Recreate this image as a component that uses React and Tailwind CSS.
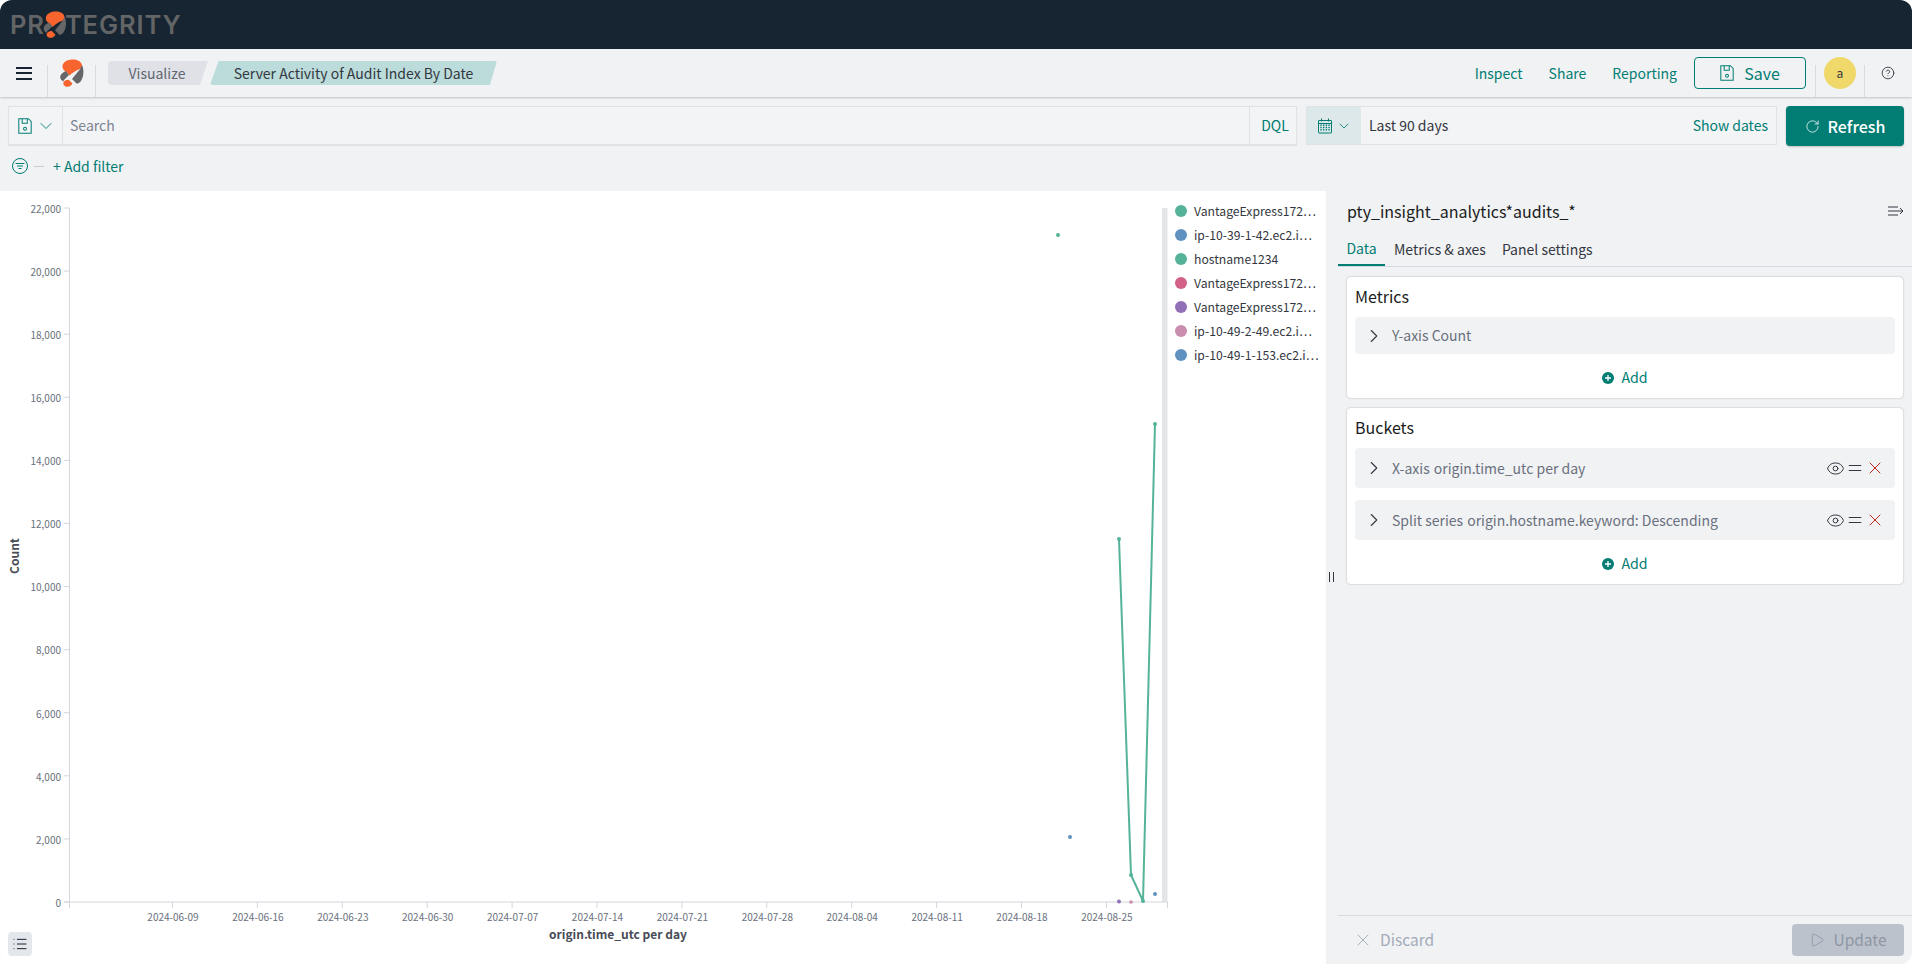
import React from "react";
import { ChevronDown, ChevronRight, RotateCw, X, Play, Eye, Equal, List, CircleHelp } from "lucide-react";

const FONT = "font-['Noto_Sans_CJK_SC','Noto_Sans',sans-serif]";

function LogoMark({ className }) {
  return (
    <svg viewBox="0 0 24 28" className={className}>
      <path d="M13 0.5C18 0.5 22 3 22 7C22 10 18 10.5 15.5 12C13 13.5 11 15 9.5 16.5L7 13.5C4 12 2 9.5 2.5 6.5C3.5 2.5 8 0.5 13 0.5Z" fill="#f8642e" />
      <path d="M22 6C24 10 24 17 21.5 21C20 24 17.5 25.5 16 24L12 20L16.5 14.5C18 12.5 20 11 22 6Z" fill="#666668" />
      <path d="M6 12L9 16L4 21C3.5 21.5 3.5 22 3.8 22.5C1 22 -0.5 19 0.5 16.5C1.5 14 4 13 6 12Z" fill="#666668" />
      <path d="M3.5 23C5 21.5 7.5 20.5 9 21L12.5 24.5C11.5 27 8 28.5 5.5 27.5C3.5 26.5 3 25 3.5 23Z" fill="#f8642e" />
    </svg>
  );
}

function SaveIcon({ className }) {
  return (
    <svg viewBox="0 0 16 16" fill="none" stroke="currentColor" strokeWidth="0.9" className={className}>
      <path d="M2.5 1.5H11L13.5 4V14.5H2.5Z" />
      <path d="M5.5 1.5V5.5H10V1.5" />
      <circle cx="8" cy="10.5" r="1.3" />
    </svg>
  );
}

function CalendarIcon() {
  const dots = [];
  for (let r = 0; r < 3; r++) for (let c = 0; c < 4; c++) dots.push([4 + c * 2.7, 7.2 + r * 2.3]);
  return (
    <svg viewBox="0 0 16 16" fill="none" stroke="currentColor" strokeWidth="1" className="h-[16px] w-[16px]">
      <rect x="1.5" y="2.5" width="13" height="12.5" rx="0.5" />
      <path d="M1.5 5.5H14.5M4.5 0.5V3.5M11.5 0.5V3.5" />
      {dots.map(([x, y], i) => (
        <rect key={i} x={x - 0.7} y={y - 0.7} width="1.4" height="1.4" fill="currentColor" stroke="none" />
      ))}
    </svg>
  );
}

function FilterIcon() {
  return (
    <svg viewBox="0 0 16 16" fill="none" stroke="currentColor" strokeWidth="1" className="h-[16px] w-[16px] text-[#017d73]">
      <circle cx="8" cy="8" r="7.5" />
      <path d="M3.5 5.5H12.5M5 8H11M6.5 10.5H9.5" />
    </svg>
  );
}

function Crumb({ children, active }) {
  return active ? (
    <div className="flex h-6 w-[287px] items-center justify-center rounded-[3px] bg-[#bbdcda] text-[14px] text-[#343741] [clip-path:polygon(3%_0,100%_0,97.5%_100%,0_100%)]">
      {children}
    </div>
  ) : (
    <div className="flex h-6 w-[100px] items-center justify-center rounded-l-[4px] bg-[#dfe1e6] pr-[2px] text-[14px] text-[#5f6672] [clip-path:polygon(0_0,100%_0,92%_100%,0_100%)]">
      {children}
    </div>
  );
}

function AggRow({ label, detail, controls, tall }) {
  return (
    <div className={`flex items-center rounded-[4px] bg-[#f1f2f4] pr-[10px] pl-2 text-[14px] text-[#69707d] ${tall ? "h-10" : "h-[37px]"}`}>
      <ChevronRight className="mr-[7px] h-[22px] w-[22px] text-[#343741]" strokeWidth={1.2} />
      <span>{label}</span>
      {detail && <span className="ml-1">{detail}</span>}
      {controls && (
        <div className="ml-auto flex items-center">
          <Eye className="h-[19px] w-[19px] text-[#343741]" strokeWidth={1.25} />
          <Equal className="h-5 w-5 text-[#343741]" strokeWidth={1.25} />
          <X className="h-5 w-5 text-[#bd271e]" strokeWidth={1.2} />
        </div>
      )}
    </div>
  );
}

function AddRow() {
  return (
    <div className="flex items-center justify-center gap-[7px] pt-[4px] text-[14.2px] text-[#017d73]">
      <svg viewBox="0 0 12 12" className="h-[12px] w-[12px]">
        <circle cx="6" cy="6" r="6" fill="#017d73" />
        <path d="M6 3V9M3 6H9" stroke="#fff" strokeWidth="1.3" />
      </svg>
      <span>Add</span>
    </div>
  );
}

const LEGEND = [
  ["#54b399", "VantageExpress172"],
  ["#6092c0", "ip-10-39-1-42.ec2.i"],
  ["#54b399", "hostname1234", true],
  ["#d36086", "VantageExpress172"],
  ["#9170b8", "VantageExpress172"],
  ["#ca8eae", "ip-10-49-2-49.ec2.i"],
  ["#6092c0", "ip-10-49-1-153.ec2.i"],
];

function Chart() {
  const y0 = 902;
  const step = 63.09;
  const yTicks = Array.from({ length: 12 }, (_, i) => i * 2000);
  const dates = ["2024-06-09", "2024-06-16", "2024-06-23", "2024-06-30", "2024-07-07", "2024-07-14", "2024-07-21", "2024-07-28", "2024-08-04", "2024-08-11", "2024-08-18", "2024-08-25"];
  return (
    <svg viewBox="0 191 1175 773" className="h-[773px] w-[1175px] shrink-0" style={{ fontFamily: "'Noto Sans CJK SC','Noto Sans',sans-serif" }}>
      <rect x="1162" y="208" width="5.5" height="694" fill="#e3e5e9" />
      <path d="M69.5 208V908M64 902H1167.5M1167.5 902V908" stroke="#d3d6dc" strokeWidth="1" fill="none" />
      {yTicks.map((v, i) => {
        const y = y0 - i * step;
        return (
          <g key={v}>
            <path d={`M64 ${y}H69.5`} stroke="#d3d6dc" />
            <text x="61" y={y + 4.8} textAnchor="end" fontSize="10" fill="#69707d">{v.toLocaleString("en-US")}</text>
          </g>
        );
      })}
      {dates.map((d, i) => {
        const x = 172.5 + i * 84.9;
        return (
          <g key={d}>
            <path d={`M${x} 902V908`} stroke="#d3d6dc" />
            <text x={x + 0.5} y="920.5" textAnchor="middle" fontSize="10" fill="#69707d">{d}</text>
          </g>
        );
      })}
      <text x="618" y="939" textAnchor="middle" fontSize="12" fontWeight="700" fill="#484c56">origin.time_utc per day</text>
      <text transform="translate(19 556) rotate(-90)" textAnchor="middle" fontSize="12" fontWeight="700" fill="#484c56">Count</text>
      <polyline points="1119,539 1131,875 1143,901 1155,424" fill="none" stroke="#54b399" strokeWidth="2" />
      <circle cx="1119" cy="539" r="2" fill="#54b399" />
      <circle cx="1131" cy="875" r="2" fill="#54b399" />
      <circle cx="1143" cy="901" r="2" fill="#54b399" />
      <circle cx="1155" cy="424" r="2" fill="#54b399" />
      <circle cx="1058" cy="235" r="2" fill="#54b399" />
      <circle cx="1070" cy="837" r="2" fill="#6092c0" />
      <circle cx="1155" cy="894" r="2" fill="#6092c0" />
      <circle cx="1119" cy="901.5" r="2" fill="#9170b8" />
      <circle cx="1131" cy="902" r="1.8" fill="#ca8eae" />
    </svg>
  );
}

export default function App() {
  return (
    <div className={`${FONT} flex h-[964px] w-[1912px] flex-col overflow-hidden rounded-xl bg-[#f1f2f4] text-[#343741]`}>
      <header className="flex h-[49px] shrink-0 items-center bg-[#172431] pl-[10px]">
        <div className="flex items-center font-['Inter',sans-serif] text-[25.5px] leading-none font-semibold tracking-[0.9px] text-[#636466]">
          <span>PR</span>
          <LogoMark className="mx-[-2px] h-[27px] w-[24px]" />
          <span>TEGRITY</span>
        </div>
      </header>

      <nav className="relative z-10 flex h-[48px] shrink-0 items-stretch bg-[#f1f2f4] shadow-[0_1px_2px_rgba(0,0,0,0.2)]">
        <div className="flex w-[47px] items-center justify-center">
          <div className="flex w-4 flex-col gap-[3.5px]">
            <span className="h-[2px] bg-[#172431]" />
            <span className="h-[2px] bg-[#172431]" />
            <span className="h-[2px] bg-[#172431]" />
          </div>
        </div>
        <div className="mt-4 flex w-[49px] items-start justify-center border-x border-[#d8dbe0]">
          <LogoMark className="mt-[-6px] h-[28px] w-[24px]" />
        </div>
        <div className="ml-3 flex items-center gap-[2px]">
          <Crumb>Visualize</Crumb>
          <Crumb active>Server Activity of Audit Index By Date</Crumb>
        </div>
        <div className="ml-auto flex items-center text-[14px] text-[#017d73]">
          <span className="mr-[26px]">Inspect</span>
          <span className="mr-[26px]">Share</span>
          <span className="mr-[17px]">Reporting</span>
          <div className="flex h-8 w-[112px] items-center justify-center gap-[8px] rounded-[4px] border border-[#017d73] pr-[2px] text-[16px]">
            <SaveIcon className="h-[18px] w-[18px]" />
            <span>Save</span>
          </div>
        </div>
        <div className="mt-4 ml-[9px] flex w-[50px] items-start justify-center border-x border-[#d8dbe0]">
          <div className="mt-[-8px] flex h-8 w-8 items-center justify-center rounded-full bg-[#f0d86a] text-[12px] text-[#343741]">a</div>
        </div>
        <div className="flex w-[47px] items-center justify-center pr-[1px]">
          <CircleHelp className="h-[14px] w-[14px] text-[#343741]" strokeWidth={1.5} />
        </div>
      </nav>

      <div className="flex h-[94px] shrink-0 flex-col bg-[#f1f2f4] px-2 pt-[9px]">
        <div className="flex h-[40px] items-stretch">
          <div className="flex h-[39px] flex-1 items-stretch border border-[#dfe2e6] bg-[#f3f4f6] shadow-[0_1px_1px_rgba(0,0,0,0.06)]">
            <div className="flex w-[54px] items-center justify-center gap-[2px] border-r border-[#dfe2e6] text-[#017d73]">
              <SaveIcon className="h-[18px] w-[18px]" />
              <ChevronDown className="h-5 w-5" strokeWidth={1.1} />
            </div>
            <div className="flex flex-1 items-center pl-[7px] text-[14px] text-[#7d838f]">Search</div>
            <div className="flex w-[47px] items-center justify-center border-l border-[#dfe2e6] pl-[4px] text-[14px] text-[#017d73]">DQL</div>
          </div>
          <div className="ml-[9px] flex h-[39px] w-[471px] items-stretch border border-[#dfe2e6] bg-[#f3f4f6]">
            <div className="flex w-[54px] items-center justify-center gap-[3px] bg-[#dde8ea] text-[#017d73]">
              <CalendarIcon />
              <ChevronDown className="h-4 w-4" strokeWidth={1.25} />
            </div>
            <div className="flex flex-1 items-center pl-2 text-[14px] text-[#343741]">Last 90 days</div>
            <div className="flex items-center pr-[8px] text-[14px] text-[#017d73]">Show dates</div>
          </div>
          <div className="ml-[9px] flex h-10 w-[118px] items-center justify-center gap-[8px] rounded-[4px] bg-[#017d73] text-[16px] font-medium text-white shadow-[0_1px_2px_rgba(0,0,0,0.2)]">
            <RotateCw className="h-[15px] w-[15px]" strokeWidth={1.25} />
            <span>Refresh</span>
          </div>
        </div>
        <div className="mt-[12px] flex items-center pl-[4px]">
          <FilterIcon />
          <span className="ml-[6px] h-px w-[10px] bg-[#c9ccd2]" />
          <span className="ml-[9px] text-[14px] leading-4 text-[#017d73]">+ Add filter</span>
        </div>
      </div>

      <main className="flex min-h-0 flex-1">
        <section className="relative flex w-[1326px] shrink-0 rounded-bl-xl bg-white">
          <Chart />
          <div className="flex flex-col gap-[4px] pt-[10px] text-[12.2px] text-[#343741]">
            {LEGEND.map(([color, text, full], i) => (
              <div key={i} className="flex h-[20px] items-center">
                <span className="mr-[7px] h-3 w-3 shrink-0 rounded-full" style={{ backgroundColor: color }} />
                <span className="whitespace-nowrap">{text}{!full && "…"}</span>
              </div>
            ))}
          </div>
          <div className="absolute bottom-2 left-2 flex h-6 w-6 items-center justify-center rounded-[4px] bg-[#e4e7eb]">
            <List className="h-4 w-4 text-[#172431]" strokeWidth={1.5} />
          </div>
        </section>

        <div className="relative w-[12px] shrink-0">
          <span className="absolute top-[381px] left-[3px] h-[10px] w-[5px] border-x border-[#343741]" />
        </div>

        <aside className="flex min-w-0 flex-1 flex-col">
          <div className="flex h-[40px] items-center justify-between pr-[8px] pl-[9px]">
            <h2 className="text-[16px] text-[#1a1c21]">pty_insight_analytics*audits_*</h2>
            <svg viewBox="0 0 16 12" fill="none" stroke="#343741" strokeWidth="1" className="h-3 w-4">
              <path d="M0 2H10M0 6H15M0 10H10M12 3L15 6L12 9" />
            </svg>
          </div>
          <div className="flex h-[36px] items-end border-b border-[#d3dae6] text-[14px]">
            <div className="flex h-[36px] w-[47px] items-center justify-center border-b-2 border-[#017d73] pt-[2px] text-[#017d73]">Data</div>
            <span className="flex h-[36px] items-center pt-[2px] pl-[9px] text-[#343741]">Metrics &amp; axes</span>
            <span className="flex h-[36px] items-center pt-[2px] pl-[16px] text-[#343741]">Panel settings</span>
          </div>
          <div className="flex flex-col gap-[10px] pt-[10px] pr-[9px] pl-[9px]">
            <div className="flex h-[121px] flex-col rounded-[4px] bg-white px-2 shadow-[0_0_2px_rgba(0,0,0,0.3)]">
              <h3 className="flex h-[40px] items-center pb-[2px] text-[16px] font-normal text-[#1a1c21]">Metrics</h3>
              <AggRow label="Y-axis Count" />
              <div className="flex flex-1 items-center justify-center"><AddRow /></div>
            </div>
            <div className="flex h-[176px] flex-col rounded-[4px] bg-white px-2 shadow-[0_0_2px_rgba(0,0,0,0.3)]">
              <h3 className="flex h-[40px] items-center pb-[2px] text-[16px] font-normal text-[#1a1c21]">Buckets</h3>
              <div className="flex flex-col gap-3">
                <AggRow tall label="X-axis" detail="origin.time_utc per day" controls />
                <AggRow tall label="Split series" detail="origin.hostname.keyword: Descending" controls />
              </div>
              <div className="flex flex-1 items-center justify-center"><AddRow /></div>
            </div>
          </div>
          <div className="mt-auto flex h-[49px] items-center justify-between border-t border-[#d8dbe0] pr-2">
            <div className="flex items-center gap-[7px] pl-[15px] text-[15.5px] text-[#a2abba]">
              <X className="h-5 w-5" strokeWidth={1.1} />
              <span>Discard</span>
            </div>
            <div className="flex h-8 w-[112px] items-center justify-center gap-[8px] rounded-[4px] bg-[#bcc2cb] text-[15.5px] text-[#8e96a3]">
              <Play className="h-4 w-4" strokeWidth={1.25} />
              <span>Update</span>
            </div>
          </div>
        </aside>
      </main>
    </div>
  );
}
